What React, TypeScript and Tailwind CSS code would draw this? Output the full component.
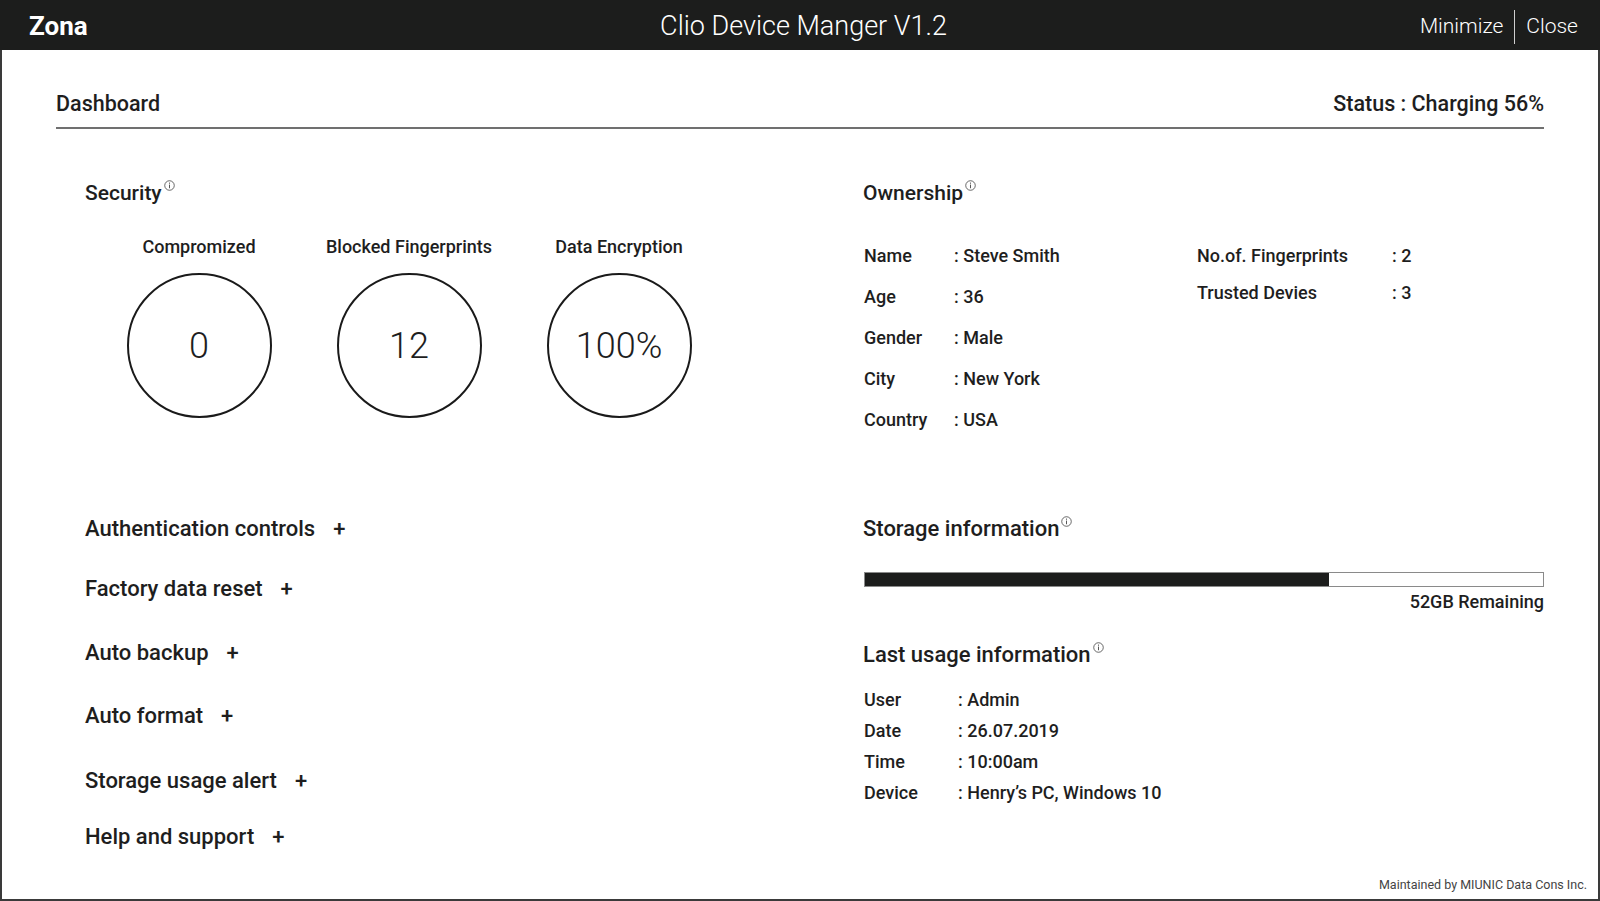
import React from 'react';

const FONT = { fontFamily: 'Roboto, "Noto Sans", sans-serif' };

function InfoMark() {
  return (
    <svg width="11" height="11" viewBox="0 0 12 12" className="ml-[2px] mt-[1px] shrink-0">
      <circle cx="6" cy="6" r="5.2" fill="none" stroke="#333" strokeWidth="0.8" />
      <line x1="6" y1="5" x2="6" y2="9" stroke="#333" strokeWidth="0.9" />
      <circle cx="6" cy="3.4" r="0.6" fill="#333" />
    </svg>
  );
}

function SectionTitle({ children, size = 'text-[21px]' }: { children: React.ReactNode; size?: string }) {
  return (
    <h2 className={`flex items-start font-medium leading-[28px] text-[#1e1e1e] ${size}`}>
      {children}
      <InfoMark />
    </h2>
  );
}

function Gauge({ label, value }: { label: string; value: string }) {
  return (
    <div className="flex w-[210px] flex-col items-center">
      <p className="text-[18px] font-medium leading-[22px] text-[#1e1e1e]">{label}</p>
      <div className="mt-[15px] flex h-[145px] w-[145px] items-center justify-center rounded-full border-2 border-[#1a1a1a]">
        <span className="text-[36px] font-light text-[#1e1e1e]">{value}</span>
      </div>
    </div>
  );
}

function InfoRow({ label, value, labelWidth }: { label: string; value: string; labelWidth: string }) {
  return (
    <div className="flex text-[18px] font-medium leading-[24px] text-[#1e1e1e]">
      <span className={labelWidth}>{label}</span>
      <span>: {value}</span>
    </div>
  );
}

const settings = [
  { name: 'Authentication controls', gap: 'mt-0' },
  { name: 'Factory data reset', gap: 'mt-[32px]' },
  { name: 'Auto backup', gap: 'mt-[36px]' },
  { name: 'Auto format', gap: 'mt-[35px]' },
  { name: 'Storage usage alert', gap: 'mt-[37px]' },
  { name: 'Help and support', gap: 'mt-[28px]' },
];

export default function App() {
  const used = 68.5;

  return (
    <div style={FONT} className="flex h-[901px] w-[1600px] flex-col overflow-hidden bg-white">
      {/* Title bar */}
      <header className="flex h-[50px] shrink-0 items-center justify-between bg-[#1c1d1c] pl-[29px] pr-[22px] pt-[3px] text-white">
        <span className="w-[300px] text-[26px] font-bold">Zona</span>
        <span className="text-[27px] font-light">Clio Device Manger V1.2</span>
        <div className="flex w-[300px] items-center justify-end text-[21px] font-light">
          <span>Minimize</span>
          <span className="mx-[11px] h-[34px] w-px bg-[#cfcfcf]" />
          <span>Close</span>
        </div>
      </header>

      <div className="flex flex-1 flex-col border-x-2 border-b-2 border-[#3a3a3a] px-[54px]">
        {/* Dashboard header */}
        <div className="flex items-center justify-between border-b-2 border-[#707070] pb-[9px] pt-[40px] text-[21.5px] font-medium leading-[28px] text-[#1e1e1e]">
          <span>Dashboard</span>
          <span>Status : Charging 56%</span>
        </div>

        <div className="flex flex-1 flex-col pl-[29px]">
          {/* Top row */}
          <div className="flex h-[384px] pt-[50px]">
            <div className="w-[778px]">
              <SectionTitle>Security</SectionTitle>
              <div className="ml-[9px] mt-[29px] flex">
                <Gauge label="Compromized" value="0" />
                <Gauge label="Blocked Fingerprints" value="12" />
                <Gauge label="Data Encryption" value="100%" />
              </div>
            </div>
            <div className="flex-1">
              <SectionTitle>Ownership</SectionTitle>
              <div className="mt-[37px] flex pl-[1px]">
                <div className="flex w-[333px] flex-col gap-[17px]">
                  <InfoRow label="Name" value="Steve Smith" labelWidth="w-[90px]" />
                  <InfoRow label="Age" value="36" labelWidth="w-[90px]" />
                  <InfoRow label="Gender" value="Male" labelWidth="w-[90px]" />
                  <InfoRow label="City" value="New York" labelWidth="w-[90px]" />
                  <InfoRow label="Country" value="USA" labelWidth="w-[90px]" />
                </div>
                <div className="flex flex-col gap-[13px]">
                  <InfoRow label="No.of. Fingerprints" value="2" labelWidth="w-[195px]" />
                  <InfoRow label="Trusted Devies" value="3" labelWidth="w-[195px]" />
                </div>
              </div>
            </div>
          </div>

          {/* Bottom row */}
          <div className="flex flex-1 pt-[2px]">
            <ul className="flex w-[778px] flex-col">
              {settings.map((s) => (
                <li key={s.name} className={`text-[22px] font-medium leading-[28px] text-[#1e1e1e] ${s.gap}`}>
                  {s.name}
                  <span className="ml-[18px]">+</span>
                </li>
              ))}
            </ul>
            <div className="flex flex-1 flex-col">
              <SectionTitle size="text-[22px]">Storage information</SectionTitle>
              <div className="ml-[1px] mt-[29px] h-[15px] border border-[#8a8a8a] bg-white">
                <div className="h-full bg-[#1c1d1c]" style={{ width: `${used}%` }} />
              </div>
              <p className="mt-[4px] text-right text-[18px] font-medium leading-[22px] text-[#1e1e1e]">52GB Remaining</p>

              <div className="mt-[28px]">
                <SectionTitle size="text-[22px]">Last usage information</SectionTitle>
              </div>
              <div className="mt-[19px] flex flex-col gap-[7px] pl-[1px]">
                <InfoRow label="User" value="Admin" labelWidth="w-[94px]" />
                <InfoRow label="Date" value="26.07.2019" labelWidth="w-[94px]" />
                <InfoRow label="Time" value="10:00am" labelWidth="w-[94px]" />
                <InfoRow label="Device" value="Henry’s PC, Windows 10" labelWidth="w-[94px]" />
              </div>
            </div>
          </div>
        </div>

        <p className="-mr-[43px] pb-[4px] text-right text-[12.5px] text-[#444]">Maintained by MIUNIC Data Cons Inc.</p>
      </div>
    </div>
  );
}
